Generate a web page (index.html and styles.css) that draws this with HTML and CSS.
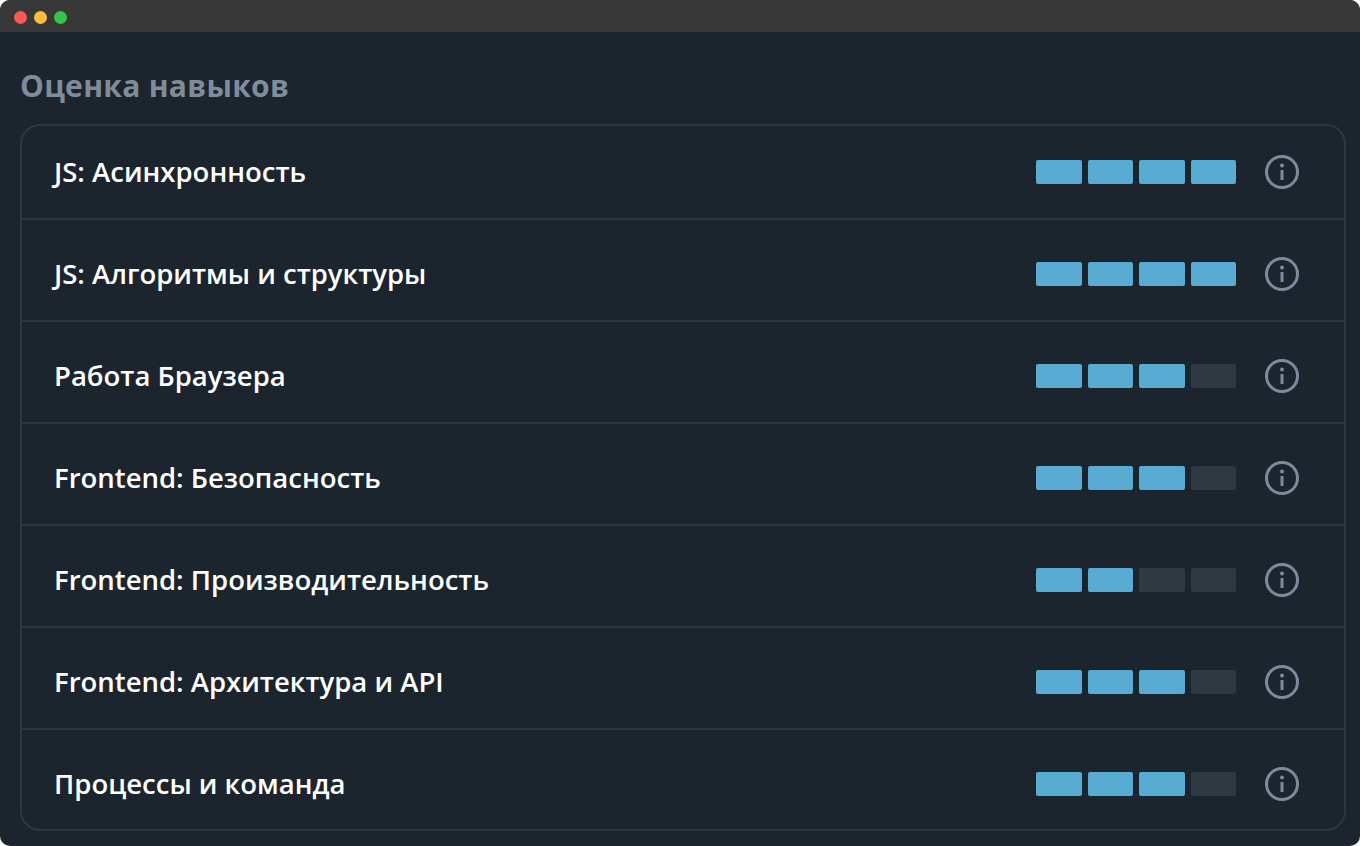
FILE: index.html
```html
<!DOCTYPE html>
<html lang="ru">
<head>
<meta charset="utf-8">
<title>Оценка навыков</title>
<link rel="stylesheet" href="styles.css">
</head>
<body>
<div class="window">
  <header class="titlebar">
    <span class="dot dot-red"></span><span class="dot dot-yellow"></span><span class="dot dot-green"></span>
  </header>
  <main class="content">
    <h1 class="heading">Оценка навыков</h1>
    <section class="card">
      <div class="row"><span class="name">JS: Асинхронность</span><div class="meter"><i class="seg on"></i><i class="seg on"></i><i class="seg on"></i><i class="seg on"></i></div><svg class="info" viewBox="0 0 34 34"><circle cx="17" cy="17" r="15.5"/><circle class="fill" cx="17" cy="10.5" r="2"/><rect class="fill" x="15.5" y="15" width="3" height="10"/></svg></div>
      <div class="row"><span class="name">JS: Алгоритмы и структуры</span><div class="meter"><i class="seg on"></i><i class="seg on"></i><i class="seg on"></i><i class="seg on"></i></div><svg class="info" viewBox="0 0 34 34"><circle cx="17" cy="17" r="15.5"/><circle class="fill" cx="17" cy="10.5" r="2"/><rect class="fill" x="15.5" y="15" width="3" height="10"/></svg></div>
      <div class="row"><span class="name">Работа Браузера</span><div class="meter"><i class="seg on"></i><i class="seg on"></i><i class="seg on"></i><i class="seg"></i></div><svg class="info" viewBox="0 0 34 34"><circle cx="17" cy="17" r="15.5"/><circle class="fill" cx="17" cy="10.5" r="2"/><rect class="fill" x="15.5" y="15" width="3" height="10"/></svg></div>
      <div class="row"><span class="name">Frontend: Безопасность</span><div class="meter"><i class="seg on"></i><i class="seg on"></i><i class="seg on"></i><i class="seg"></i></div><svg class="info" viewBox="0 0 34 34"><circle cx="17" cy="17" r="15.5"/><circle class="fill" cx="17" cy="10.5" r="2"/><rect class="fill" x="15.5" y="15" width="3" height="10"/></svg></div>
      <div class="row"><span class="name">Frontend: Производительность</span><div class="meter"><i class="seg on"></i><i class="seg on"></i><i class="seg"></i><i class="seg"></i></div><svg class="info" viewBox="0 0 34 34"><circle cx="17" cy="17" r="15.5"/><circle class="fill" cx="17" cy="10.5" r="2"/><rect class="fill" x="15.5" y="15" width="3" height="10"/></svg></div>
      <div class="row"><span class="name">Frontend: Архитектура и API</span><div class="meter"><i class="seg on"></i><i class="seg on"></i><i class="seg on"></i><i class="seg"></i></div><svg class="info" viewBox="0 0 34 34"><circle cx="17" cy="17" r="15.5"/><circle class="fill" cx="17" cy="10.5" r="2"/><rect class="fill" x="15.5" y="15" width="3" height="10"/></svg></div>
      <div class="row"><span class="name">Процессы и команда</span><div class="meter"><i class="seg on"></i><i class="seg on"></i><i class="seg on"></i><i class="seg"></i></div><svg class="info" viewBox="0 0 34 34"><circle cx="17" cy="17" r="15.5"/><circle class="fill" cx="17" cy="10.5" r="2"/><rect class="fill" x="15.5" y="15" width="3" height="10"/></svg></div>
    </section>
  </main>
</div>
</body>
</html>
```

FILE: styles.css
```css
html, body {
  margin: 0;
  height: 100%;
  background: #ffffff;
}
body {
  font-family: "Open Sans", "Noto Sans", sans-serif;
  overflow: hidden;
}
.window {
  height: 846px;
  background: #1c252e;
  border-radius: 10px;
  overflow: hidden;
  display: flex;
  flex-direction: column;
}
.titlebar {
  height: 32px;
  flex: none;
  background: #383838;
  display: flex;
  align-items: center;
  gap: 7px;
  padding: 2px 0 0 14px;
  box-sizing: border-box;
}
.dot {
  width: 13px;
  height: 13px;
  border-radius: 50%;
}
.dot-red { background: #fc5753; }
.dot-yellow { background: #fdbc40; }
.dot-green { background: #33c748; }
.content {
  padding: 0 14px 0 20px;
}
.heading {
  margin: 35px 0 20px;
  font-size: 30px;
  line-height: 37px;
  letter-spacing: 0.3px;
  font-weight: 700;
  color: #7f8d9b;
}
.card {
  border: 2px solid #2d3842;
  border-radius: 20px;
  height: 707px;
  box-sizing: border-box;
}
.row {
  display: flex;
  align-items: center;
  padding: 42px 45px 34px 32px;
  border-bottom: 2px solid #2d3842;
}
.row:first-child {
  padding-top: 34px;
}
.row:last-child {
  border-bottom: 0;
  padding-bottom: 33px;
}
.name {
  flex: 1;
  font-size: 27.5px;
  line-height: 24px;
  font-weight: 600;
  color: #ffffff;
}
.meter {
  display: grid;
  grid-template-columns: repeat(4, 1fr);
  gap: 6px;
  width: 200px;
  height: 24px;
  margin-right: 29px;
}
.seg {
  background: #2e3942;
  border-radius: 2px;
}
.seg.on {
  background: #58acd4;
}
.info {
  width: 34px;
  height: 34px;
  margin: -5px 0;
  fill: none;
  stroke: #7c8b9b;
  stroke-width: 3;
}
.info .fill {
  fill: #7c8b9b;
  stroke: none;
}
```
